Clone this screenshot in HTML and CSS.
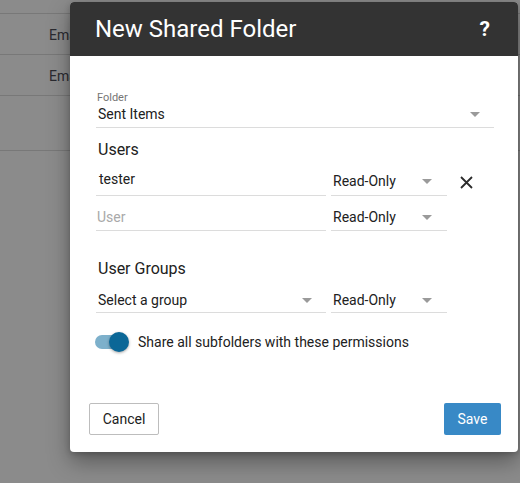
FILE: index.html
```html
<!DOCTYPE html>
<html>
<head>
<meta charset="utf-8">
<link rel="stylesheet" href="styles.css">
</head>
<body>
<div class="bg-table">
  <div class="bg-row first"></div>
  <div class="bg-row"><span class="bg-cell">Email</span></div>
  <div class="bg-row"><span class="bg-cell">Email</span></div>
  <div class="bg-row tall"></div>
</div>

<div class="dialog">
  <div class="dlg-head">
    <span class="dlg-title">New Shared Folder</span>
    <span class="dlg-help">?</span>
  </div>
  <div class="dlg-body">
    <div class="field folder">
      <div class="field-label">Folder</div>
      <div class="field-value">Sent Items<span class="caret"></span></div>
    </div>

    <div class="section-title">Users</div>
    <div class="row">
      <div class="input">tester</div>
      <div class="select perm">Read-Only<span class="caret"></span></div>
      <button class="remove" aria-label="Remove">
        <svg width="13" height="13" viewBox="0 0 13 13"><path d="M1 1 L12 12 M12 1 L1 12" stroke="#2b2b2b" stroke-width="1.8" fill="none"/></svg>
      </button>
    </div>
    <div class="row second">
      <div class="input placeholder">User</div>
      <div class="select perm">Read-Only<span class="caret"></span></div>
    </div>

    <div class="section-title groups">User Groups</div>
    <div class="row group-row">
      <div class="select group">Select a group<span class="caret"></span></div>
      <div class="select perm">Read-Only<span class="caret"></span></div>
    </div>

    <div class="toggle-row">
      <span class="toggle"><span class="track"></span><span class="knob"></span></span>
      <span class="toggle-label">Share all subfolders with these permissions</span>
    </div>
  </div>
  <div class="dlg-foot">
    <button class="btn cancel">Cancel</button>
    <button class="btn save">Save</button>
  </div>
</div>
</body>
</html>
```

FILE: styles.css
```css
* { box-sizing: border-box; }
html, body { margin: 0; padding: 0; }
body {
  width: 520px;
  height: 483px;
  overflow: hidden;
  background: #8b8b8b;
  font-family: Roboto, "Liberation Sans", sans-serif;
  position: relative;
}

.bg-table { display: flex; flex-direction: column; }
.bg-row {
  height: 41px;
  border-bottom: 1px solid #787878;
  padding: 11px 0 0 49px;
}
.bg-row.first { height: 14px; padding: 0; }
.bg-row.tall { height: 55px; }
.bg-cell {
  font-size: 14px;
  line-height: 18px;
  color: #2a2a30;
}

.dialog {
  position: absolute;
  left: 70px;
  top: 2px;
  width: 448px;
  height: 450px;
  background: #fff;
  border-radius: 4px;
  box-shadow: 0 10px 22px rgba(0,0,0,0.35), 0 2px 6px rgba(0,0,0,0.2);
  display: flex;
  flex-direction: column;
  overflow: hidden;
}
.dlg-head {
  height: 54px;
  background: #333333;
  display: flex;
  align-items: center;
  justify-content: space-between;
  padding: 0 28px 0 25px;
  color: #fff;
}
.dlg-title { font-size: 24px; line-height: 28px; }
.dlg-help { font-size: 21px; font-weight: 700; line-height: 26px; }

.dlg-body {
  padding: 35px 24px 0 26px;
  color: #212121;
}
.field { border-bottom: 1px solid #dcdcdc; padding-bottom: 4px; }
.field-label {
  font-size: 11px;
  line-height: 14px;
  color: #757575;
  padding-left: 1px;
}
.field-value {
  font-size: 14px;
  line-height: 18px;
  padding-left: 2px;
  display: flex;
  align-items: center;
  justify-content: space-between;
  padding-right: 14px;
}
.caret {
  width: 0;
  height: 0;
  border-left: 5px solid transparent;
  border-right: 5px solid transparent;
  border-top: 5px solid #9a9a9a;
}

.section-title {
  font-size: 16px;
  line-height: 20px;
  margin-top: 12px;
  padding-left: 2px;
}
.section-title.groups { margin-top: 28px; }

.row {
  display: flex;
  align-items: stretch;
  gap: 5px;
  height: 36px;
}
.row.second { height: 35px; }
.row.group-row { height: 34px; }
.input, .select {
  font-size: 14px;
  line-height: 18px;
  border-bottom: 1px solid #dcdcdc;
}
.input {
  width: 230px;
  padding: 10px 0 0 3px;
}
.row.second .input, .row.second .select { padding-top: 12px; }
.input.placeholder { color: #a9a9a9; padding-left: 1px; }
.select {
  display: flex;
  align-items: flex-start;
  justify-content: space-between;
  padding-top: 12px;
}
.select .caret { margin-top: 7px; }
.select.perm { width: 116px; padding-left: 2px; padding-right: 15px; }
.select.group { width: 230px; padding-left: 2px; padding-right: 14px; }
.row.group-row .select { padding-top: 12px; }

.remove {
  border: 0;
  background: none;
  padding: 0;
  margin: 16px 0 0 8px;
  width: 13px;
  height: 13px;
  align-self: flex-start;
  display: flex;
  align-items: center;
  justify-content: center;
}

.toggle-row {
  display: flex;
  align-items: center;
  margin-top: 19px;
  height: 20px;
}
.toggle {
  position: relative;
  width: 36px;
  height: 20px;
  margin-left: -1px;
  margin-right: 7px;
}
.track {
  position: absolute;
  left: 0;
  top: 3px;
  width: 32px;
  height: 14px;
  border-radius: 7px;
  background: #7db0cb;
}
.knob {
  position: absolute;
  left: 14px;
  top: 0;
  width: 20px;
  height: 20px;
  border-radius: 50%;
  background: #0b6797;
  box-shadow: 0 1px 3px rgba(0,0,0,0.35);
}
.toggle-label {
  font-size: 14px;
  line-height: 20px;
  color: #212121;
}

.dlg-foot {
  margin-top: auto;
  display: flex;
  justify-content: space-between;
  align-items: center;
  padding: 0 17px 17px 19px;
}
.btn {
  font-family: Roboto, "Liberation Sans", sans-serif;
  font-size: 14px;
  height: 32px;
  border-radius: 2px;
  padding: 0;
  cursor: pointer;
}
.btn.cancel {
  width: 70px;
  background: #fff;
  border: 1px solid #bdbdbd;
  color: #212121;
}
.btn.save {
  width: 57px;
  background: #3889c6;
  border: 0;
  color: #fff;
}
```
